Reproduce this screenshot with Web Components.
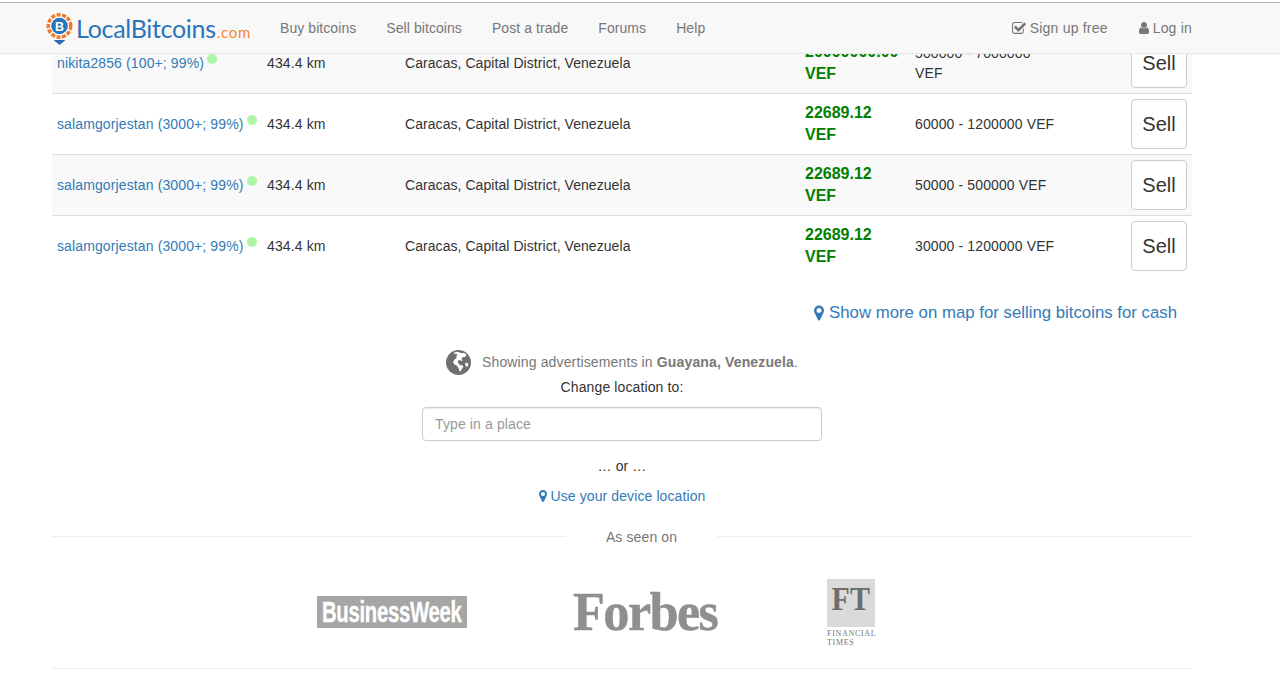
<!DOCTYPE html>
<html><head><meta charset="utf-8"><title>LocalBitcoins</title>
<style>
html,body{margin:0;padding:0;height:684px;overflow:hidden;background:#fff;font:14px/20px "Liberation Sans",Arial,sans-serif;color:#333}
</style></head><body>
<lb-navbar>
  <lb-logo slot="brand"></lb-logo>
  <nav-link>Buy bitcoins</nav-link>
  <nav-link>Sell bitcoins</nav-link>
  <nav-link>Post a trade</nav-link>
  <nav-link>Forums</nav-link>
  <nav-link>Help</nav-link>
  <nav-link slot="right" icon="check">Sign up free</nav-link>
  <nav-link slot="right" icon="user">Log in</nav-link>
</lb-navbar>
<page-body>
  <ad-table>
    <ad-row striped name="nikita2856 (100+; 99%)" price="20000000.00" range="500000 - 7000000" wrap></ad-row>
    <ad-row name="salamgorjestan (3000+; 99%)" price="22689.12" range="60000 - 1200000 VEF"></ad-row>
    <ad-row striped name="salamgorjestan (3000+; 99%)" price="22689.12" range="50000 - 500000 VEF"></ad-row>
    <ad-row name="salamgorjestan (3000+; 99%)" price="22689.12" range="30000 - 1200000 VEF"></ad-row>
  </ad-table>
  <map-link>Show more on map for selling bitcoins for cash</map-link>
  <location-box></location-box>
  <press-strip></press-strip>
</page-body>
<script>
const ICONS={
 marker:['0 128 1024 1536','M768 640q0-106-75-181t-181-75-181 75-75 181 75 181 181 75 181-75 75-181zm256 0q0 109-33 179l-364 774q-16 33-47.5 52t-67.5 19-67.5-19-46.5-52l-365-774q-33-70-33-179 0-212 150-362t362-150 362 150 150 362z'],
 user:['0 128 1536 1536','M1536 1399q0 109-62.5 187t-150.5 78h-854q-88 0-150.5-78t-62.5-187q0-85 8.5-160.5t31.5-152 58.5-131 94-89 134.5-34.5q131 128 313 128t313-128q76 0 134.5 34.5t94 89 58.5 131 31.5 152 8.5 160.5zm-256-887q0 159-112.5 271.5t-271.5 112.5-271.5-112.5-112.5-271.5 112.5-271.5 271.5-112.5 271.5 112.5 112.5 271.5z'],
 check:['0 128 1664 1536','M1408 930v318q0 119-84.5 203.5t-203.5 84.5h-832q-119 0-203.5-84.5t-84.5-203.5v-832q0-119 84.5-203.5t203.5-84.5h832q63 0 117 25 15 7 18 23 3 17-9 29l-49 49q-10 10-23 10-3 0-9-2-23-6-45-6h-832q-66 0-113 47t-47 113v832q0 66 47 113t113 47h832q66 0 113-47t47-113v-254q0-13 9-22l64-64q10-10 23-10 6 0 12 3 20 8 20 29zm231-489l-814 814q-24 24-57 24t-57-24l-430-430q-24-24-24-57t24-57l110-110q24-24 57-24t57 24l263 263 647-647q24-24 57-24t57 24l110 110q24 24 24 57t-24 57z']
};
const icon=(n,w,h)=>`<svg width="${w}" height="${h}" viewBox="${ICONS[n][0]}" fill="currentColor" aria-hidden="true"><path d="${ICONS[n][1]}"/></svg>`;
function def(name,html,init){
  customElements.define(name,class extends HTMLElement{
    connectedCallback(){
      if(this.shadowRoot)return;
      this.attachShadow({mode:'open'}).innerHTML=typeof html==='function'?html(this):html;
      if(init)init(this);
    }
  });
}
def('lb-navbar',`<style>
:host{display:block;position:absolute;top:2px;left:0;right:0;height:50px;z-index:5;background:#f8f8f8;border-top:1px solid #b4b4b4;border-bottom:1px solid #e7e7e7}
.in{width:1146px;height:50px;margin:0 0 0 46px;display:flex;align-items:center}
.nav{display:flex;align-items:center}
.right{display:flex;align-items:center;margin-left:auto}
</style><div class="in"><slot name="brand"></slot><div class="nav"><slot></slot></div><div class="right"><slot name="right"></slot></div></div>`);
def('nav-link',h=>{const i=h.getAttribute('icon');const r=h.getAttribute('slot')==='right';
return `<style>
:host{display:block;color:#777;font:14px/20px "Liberation Sans",Arial,sans-serif;letter-spacing:${r?'.2px':'.07px'}}
a{display:flex;align-items:center;gap:4px;padding:0 ${r?'0 0 29px':'15px'};white-space:nowrap}
svg{display:block}
</style><a>${i?icon(i,i==='check'?14:12,i==='check'?13:12):''}<span><slot></slot></span></a>`});
def('lb-logo',`<style>
:host{display:flex;align-items:center;height:50px;width:219px}
svg{display:block;flex:none;margin-top:2px}
.t{font:400 25px/30px Lato,sans-serif;color:#2a74bb;margin-left:3px;white-space:nowrap;letter-spacing:-.3px}
.c{font:400 15px/20px Lato,sans-serif;color:#f58634;letter-spacing:.7px;margin-left:1px}
</style>
<svg width="27" height="32" viewBox="0 0 27 32"><circle cx="13.500" cy="13" r="11.200" fill="#fff" stroke="#f0792b" stroke-width="3.500" stroke-dasharray="4 1.500"/><circle cx="13.500" cy="13" r="8.300" fill="#2a74bb"/><text x="13.500" y="17.500" text-anchor="middle" font-family="Liberation Sans" font-weight="700" font-size="12.500" fill="#fff">B</text><path d="M7.500 27h12l-6 5z" fill="#2a6db0"/></svg>
<span class="t">LocalBitcoins<span class="c">.com</span></span>`);
def('page-body',`<style>:host{display:block;width:1140px;margin:33px 0 0 52px}</style><slot></slot>`);
def('ad-table',`<style>:host{display:block}</style><slot></slot>`);
def('ad-row',h=>`<style>
:host{display:grid;grid-template-columns:210px 138px 400px 110px 216px 66px;height:60px;align-items:center;background:${h.hasAttribute('striped')?'#f9f9f9':'#fff'};${h.previousElementSibling?'border-top:1px solid #ddd;':''}font:14px/20px "Liberation Sans",Arial,sans-serif;color:#333}
div{padding:0 5px;white-space:nowrap;letter-spacing:.12px}
div.addr{letter-spacing:.06px}
a{color:#337ab7}
i{display:inline-block;width:10px;height:10px;border-radius:50%;background:#aef5a5;vertical-align:4px;margin-left:3px}
.p{font-weight:700;font-size:16px;line-height:22px;color:#008000;white-space:normal;letter-spacing:0}
button{display:block;width:56px;height:50px;padding:0;background:#fff;border:1px solid #ccc;border-radius:4px;color:#333;font:20px/28px "Liberation Sans",Arial,sans-serif}
</style>
<div><a>${h.getAttribute('name')}</a><i></i></div>
<div>434.4 km</div>
<div class="addr">Caracas, Capital District, Venezuela</div>
<div class="p">${h.getAttribute('price')}<br>VEF</div>
<div>${h.getAttribute('range')}${h.hasAttribute('wrap')?'<br>VEF':''}</div>
<div><button>Sell</button></div>`);
def('map-link',`<style>
:host{display:flex;justify-content:flex-end;align-items:center;gap:5px;margin-top:25px;padding-right:15px;height:24px;color:#337ab7;font:16.8px/24px "Liberation Sans",Arial,sans-serif}
svg{display:block}
</style>${icon('marker',10,16)}<span><slot></slot></span>`);
def('location-box',`<style>
:host{display:flex;flex-direction:column;align-items:center;width:400px;margin:24px 0 0 370px;font:14px/20px "Liberation Sans",Arial,sans-serif;color:#333;letter-spacing:.12px}
.show{display:flex;align-items:center;height:26px;color:#777;white-space:nowrap;width:max-content;letter-spacing:.14px}
.show svg{display:block;margin-right:11px;flex:none}
.change{margin-top:2px;height:20px}
input{display:block;box-sizing:border-box;width:400px;height:34px;margin-top:10px;padding:6px 12px;border:1px solid #ccc;border-radius:4px;font:14px/20px "Liberation Sans",Arial,sans-serif;letter-spacing:.12px;color:#555;box-shadow:inset 0 1px 1px rgba(0,0,0,.075);background:#fff}
input::placeholder{color:#999;opacity:1}
.or{margin-top:15px;height:20px}
.dev{margin-top:10px;color:#337ab7;display:flex;align-items:center;gap:4px;letter-spacing:.1px}
.dev svg{display:block}
</style>
<div class="show"><svg width="25" height="25" viewBox="0 0 25 25"><circle cx="12.500" cy="12.500" r="12.500" fill="#6f6f6f"/><path fill="#fff" d="M8 2.500l4-.8 3 1.200 3.500 0 2 2-1.500 2-2.500.3-1 1.800 1.200 1.500-1.500.6-1.200-1-1.800.5-.4 1.800 2 2.600 3 .5.500 1.500-1.500 2-1.200 2.500-1.300-.5-.8-3-1.700-2.500-2.800-1.200-.8-2.500 1.500-2.500 2-1.200-.5-1.500 1.200-1.500-1.500-1.500-1.200.8z"/><path fill="#fff" d="M19 13l2.200-.3 1.300 1.500-1 2.500-1.800-.5z"/></svg><span>Showing advertisements in <b>Guayana, Venezuela</b>.</span></div>
<div class="change">Change location to:</div>
<input placeholder="Type in a place">
<div class="or">… or …</div>
<div class="dev">${icon('marker',8,12)}<span>Use your device location</span></div>`);
def('press-strip',`<style>
:host{display:block;margin-top:19px;font-family:"Liberation Sans",Arial,sans-serif}
.head{display:flex;align-items:center;height:22px;color:#777;font-size:14px;letter-spacing:.12px}
.head hr{flex:1;margin:0;border:0;border-top:1px solid #eee}
.head hr:first-child{flex:none;width:514px}
.head span{width:151px;text-align:center;margin-top:2px}
.logos{height:100px;margin-top:21px;box-sizing:border-box;display:flex;align-items:flex-start}
.bw{margin:28px 0 0 265px;width:150px;height:32px;background:#a6a6a6;overflow:hidden;display:flex;align-items:center;justify-content:center}
.bw b{display:block;flex:none;color:#fff;font:700 29px/32px "Liberation Sans",sans-serif;transform:scaleX(.7);white-space:nowrap;letter-spacing:-.4px;-webkit-text-stroke:.4px #fff}
.fb{margin:20px 0 0 106px;width:145px;height:48px;color:#8f8f8f;font:700 54px/48px "Liberation Serif",serif;letter-spacing:-1.700px;white-space:nowrap;transform:scaleX(.97);transform-origin:left;-webkit-text-stroke:.4px #8f8f8f}
.ft{margin:11px 0 0 109px;width:48px;color:#777;font-family:"Liberation Serif",serif}
.ft .sq{height:48px;background:#dadada;color:#6e6e6e;font:700 34px/40px "Liberation Serif",serif;text-align:center}
.ft .sq span{display:inline-block;transform:scaleX(.88)}
.ft .nm{font:400 8px/9px "Liberation Serif",serif;margin-top:2px;white-space:nowrap;letter-spacing:.7px}
.end{border-top:1px solid #eee}
</style>
<div class="head"><hr><span>As seen on</span><hr></div>
<div class="logos">
<div class="bw"><b>BusinessWeek</b></div>
<div class="fb">Forbes</div>
<div class="ft"><div class="sq"><span>FT</span></div><div class="nm">FINANCIAL<br>TIMES</div></div>
</div>
<div class="end"></div>`);
</script>
</body></html>
